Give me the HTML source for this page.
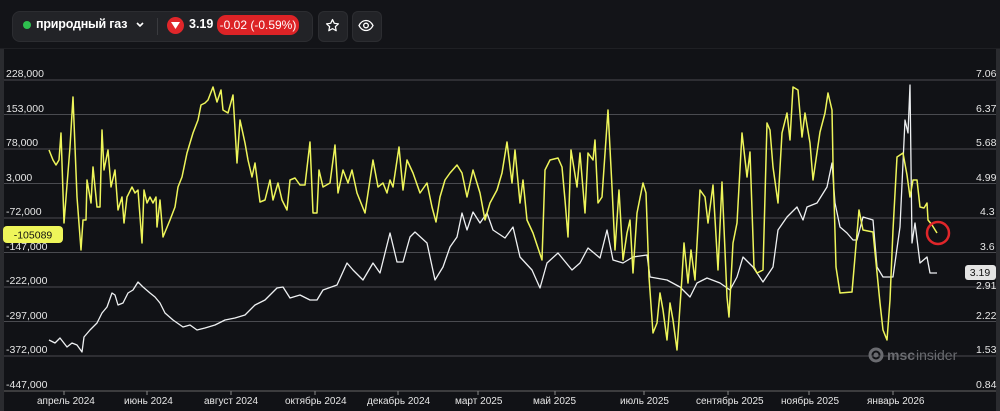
<!DOCTYPE html><html><head><meta charset="utf-8"><style>
body{margin:0;width:1000px;height:411px;background:#111216;overflow:hidden;font-family:"Liberation Sans",sans-serif;position:relative}
.top{position:absolute;left:0;top:0;width:1000px;height:48px;background:#131418;border-bottom:1px solid #1f2024}
.pill{position:absolute;left:12px;top:11px;width:299px;height:29px;background:#222327;border-radius:8px;border:1px solid #2c2d31}
.btn{position:absolute;top:11px;width:28px;height:29px;background:#222327;border-radius:6px;border:1px solid #2c2d31}
.t{position:absolute;color:#fff;font-weight:bold;font-size:12.5px}
.ax{position:absolute;color:#e6e6e6;font-size:10.5px}
.dl{position:absolute;top:396px;color:#e6e6e6;font-size:10px}
</style></head><body>
<div class="top"></div>
<div class="pill"></div>
<div style="position:absolute;left:23px;top:21px;width:8px;height:8px;border-radius:50%;background:#2ec04f"></div>
<div class="t" style="left:36px;top:17px;letter-spacing:-0.2px">природный газ</div>
<svg style="position:absolute;left:136px;top:22px" width="8" height="6"><path d="M1 1L4 4L7 1" stroke="#fff" stroke-width="1.6" fill="none"/></svg>
<div style="position:absolute;left:157px;top:18px;width:1px;height:17px;background:#3a3b3f"></div>
<div style="position:absolute;left:167px;top:17px;width:17px;height:17px;border-radius:50%;background:#e0262a"></div>
<svg style="position:absolute;left:171px;top:22px" width="9" height="8"><path d="M0 0H9L4.5 7Z" fill="#fff"/></svg>
<div class="t" style="left:189px;top:17px">3.19</div>
<div style="position:absolute;left:217px;top:15px;width:82px;height:20px;border-radius:9px;background:#dc2326;color:#fff;font-size:12px;line-height:20px;text-align:center">-0.02 (-0.59%)</div>
<div class="btn" style="left:318px"></div><div class="btn" style="left:352px"></div>
<svg style="position:absolute;left:325px;top:18px" width="15" height="15" viewBox="0 0 24 24"><path d="M12 2.5l2.9 6 6.6.8-4.9 4.5 1.3 6.5L12 17l-5.9 3.3 1.3-6.5L2.5 9.3l6.6-.8z" stroke="#fff" stroke-width="2" fill="none" stroke-linejoin="round"/></svg>
<svg style="position:absolute;left:358px;top:19px" width="16" height="13" viewBox="0 0 24 18"><path d="M1.5 9C4 4 8 1.5 12 1.5S20 4 22.5 9C20 14 16 16.5 12 16.5S4 14 1.5 9Z" stroke="#fff" stroke-width="2" fill="none"/><circle cx="12" cy="9" r="3.5" stroke="#fff" stroke-width="2" fill="none"/></svg>
<svg style="position:absolute;left:0;top:0" width="1000" height="411">
<rect x="0" y="49" width="4" height="362" fill="#2a2b2f"/>
<rect x="996" y="49" width="4" height="362" fill="#2a2b2f"/>
<g stroke="#4a4b50" stroke-width="1">
<line x1="4" y1="80" x2="996" y2="80"/><line x1="4" y1="114.5" x2="996" y2="114.5"/><line x1="4" y1="149" x2="996" y2="149"/><line x1="4" y1="183.5" x2="996" y2="183.5"/><line x1="4" y1="218" x2="996" y2="218"/><line x1="4" y1="252.5" x2="996" y2="252.5"/><line x1="4" y1="287" x2="996" y2="287"/><line x1="4" y1="321.5" x2="996" y2="321.5"/><line x1="4" y1="356" x2="996" y2="356"/><line x1="4" y1="391" x2="996" y2="391" stroke="#666"/>
</g>
<g stroke="#888" stroke-width="1"><line x1="64" y1="391" x2="64" y2="395"/><line x1="147" y1="391" x2="147" y2="395"/><line x1="231" y1="391" x2="231" y2="395"/><line x1="315" y1="391" x2="315" y2="395"/><line x1="398" y1="391" x2="398" y2="395"/><line x1="478" y1="391" x2="478" y2="395"/><line x1="555" y1="391" x2="555" y2="395"/><line x1="644" y1="391" x2="644" y2="395"/><line x1="728" y1="391" x2="728" y2="395"/><line x1="809" y1="391" x2="809" y2="395"/><line x1="893" y1="391" x2="893" y2="395"/></g>
<polyline fill="none" stroke="#eef0f2" stroke-width="1.3" stroke-linejoin="round" points="49,340 55,343 60,338 67,347 72,343 77,345 82,352 84,337 90,330 97,323 102,313 107,307 112,293 115,295 118,305 123,303 128,293 133,290 138,282 143,287 150,293 155,297 160,303 165,313 173,320 183,327 190,325 197,330 205,328 215,325 225,320 235,318 245,315 255,305 265,300 277,288 283,287 290,298 300,295 310,300 317,300 323,290 337,285 347,263 353,270 363,280 373,263 380,273 390,233 397,262 403,262 410,237 415,232 427,243 435,280 443,267 450,247 457,237 462,213 467,230 473,212 480,223 487,213 493,230 505,238 513,227 520,257 532,270 540,288 547,263 558,253 572,270 580,263 588,248 600,258 607,230 613,260 623,263 633,257 647,255 650,277 667,280 680,287 690,297 697,283 707,278 720,283 730,290 737,277 743,257 753,267 763,282 773,267 778,230 787,217 797,207 803,220 807,207 817,203 827,187 832,163 835,203 840,227 847,233 853,240 857,240 863,217 873,220 877,267 883,277 893,277 900,227 905,120 908,133 910,85 912,243 915,223 920,263 927,257 930,273 937,273"/>
<polyline fill="none" stroke="#eef55a" stroke-width="1.5" stroke-linejoin="round" points="49,150 53,160 56,165 59,160 61,133 64,223 70,147 73,97 77,197 81,250 83,220 86,220 87,180 91,203 93,167 97,207 100,207 102,130 104,170 108,150 111,187 115,170 118,210 122,197 124,223 127,197 132,187 135,193 138,190 142,243 144,190 147,203 150,197 153,203 156,197 157,227 160,200 163,237 170,220 175,207 178,187 182,177 187,153 193,133 198,120 201,105 205,103 208,100 213,87 217,102 221,90 223,110 228,113 233,95 237,163 240,120 245,143 248,160 252,177 255,163 260,202 265,200 270,180 273,200 278,183 282,200 287,210 290,180 295,178 300,185 305,185 310,142 313,213 317,213 319,170 323,187 330,183 335,145 338,193 343,170 348,183 352,170 357,193 365,213 370,180 373,160 378,187 383,183 387,193 390,180 393,187 399,147 403,190 407,160 413,173 420,193 427,183 432,207 436,222 440,197 445,180 450,173 457,165 462,173 467,197 473,170 480,193 485,220 490,203 497,190 502,173 507,142 512,183 515,150 520,203 523,180 527,220 533,233 542,260 545,170 550,160 558,158 562,167 565,200 568,237 571,150 577,187 580,153 585,213 588,153 593,160 595,140 598,203 602,197 608,110 612,187 615,250 619,190 623,260 627,233 630,220 633,273 637,213 643,183 646,193 649,277 653,333 657,323 660,293 663,310 667,340 670,303 673,320 677,350 682,277 684,243 688,283 691,250 695,280 700,190 705,197 708,223 713,185 718,270 722,182 727,297 729,317 733,243 737,223 742,133 747,177 750,152 754,267 757,273 763,270 767,123 770,130 773,167 778,203 782,133 787,113 790,140 793,87 798,90 802,137 805,113 810,143 813,180 820,132 825,113 828,93 832,110 833,163 836,267 840,293 852,292 859,210 863,230 873,232 880,303 883,330 887,340 890,300 893,230 897,157 903,153 907,175 910,197 913,180 917,180 920,207 924,208 927,203 928,220 932,225 937,233"/>
<circle cx="938" cy="233" r="11" fill="none" stroke="#e0262a" stroke-width="2.5"/>
<rect x="3" y="226" width="60" height="17" rx="4" fill="#eef55a"/>
<text x="33" y="238.5" text-anchor="middle" font-size="10.5" fill="#111" font-family="Liberation Sans">-105089</text>
<rect x="965" y="265" width="31" height="15" rx="3" fill="#e4e4e4"/>
<text x="980" y="276" text-anchor="middle" font-size="10.5" fill="#111" font-family="Liberation Sans">3.19</text>
<g fill="none" stroke="#6a6b70" stroke-width="3"><circle cx="876" cy="355" r="6"/></g>
<circle cx="876" cy="355" r="2.5" fill="#6a6b70"/>
<text x="887" y="360" font-size="14" fill="#6a6b70" font-family="Liberation Sans" font-weight="bold">msc</text>
<text x="916" y="360" font-size="14" fill="#6a6b70" font-family="Liberation Sans">insider</text>
</svg>
<div class="ax" style="left:6px;top:68px">228,000</div><div class="ax" style="left:6px;top:103px">153,000</div><div class="ax" style="left:6px;top:137px">78,000</div><div class="ax" style="left:6px;top:172px">3,000</div><div class="ax" style="left:6px;top:206px">-72,000</div><div class="ax" style="left:6px;top:241px">-147,000</div><div class="ax" style="left:6px;top:275px">-222,000</div><div class="ax" style="left:6px;top:310px">-297,000</div><div class="ax" style="left:6px;top:344px">-372,000</div><div class="ax" style="left:6px;top:379px">-447,000</div>
<div class="ax" style="left:976px;top:68px">7.06</div><div class="ax" style="left:976px;top:103px">6.37</div><div class="ax" style="left:976px;top:137px">5.68</div><div class="ax" style="left:976px;top:172px">4.99</div><div class="ax" style="left:980px;top:206px">4.3</div><div class="ax" style="left:980px;top:241px">3.6</div><div class="ax" style="left:976px;top:280px">2.91</div><div class="ax" style="left:976px;top:310px">2.22</div><div class="ax" style="left:976px;top:344px">1.53</div><div class="ax" style="left:976px;top:379px">0.84</div>
<div class="dl" style="left:37px">апрель 2024</div><div class="dl" style="left:124px">июнь 2024</div><div class="dl" style="left:204px">август 2024</div><div class="dl" style="left:285px">октябрь 2024</div><div class="dl" style="left:367px">декабрь 2024</div><div class="dl" style="left:455px">март 2025</div><div class="dl" style="left:533px">май 2025</div><div class="dl" style="left:620px">июль 2025</div><div class="dl" style="left:696px">сентябрь 2025</div><div class="dl" style="left:781px">ноябрь 2025</div><div class="dl" style="left:867px">январь 2026</div>
</body></html>
